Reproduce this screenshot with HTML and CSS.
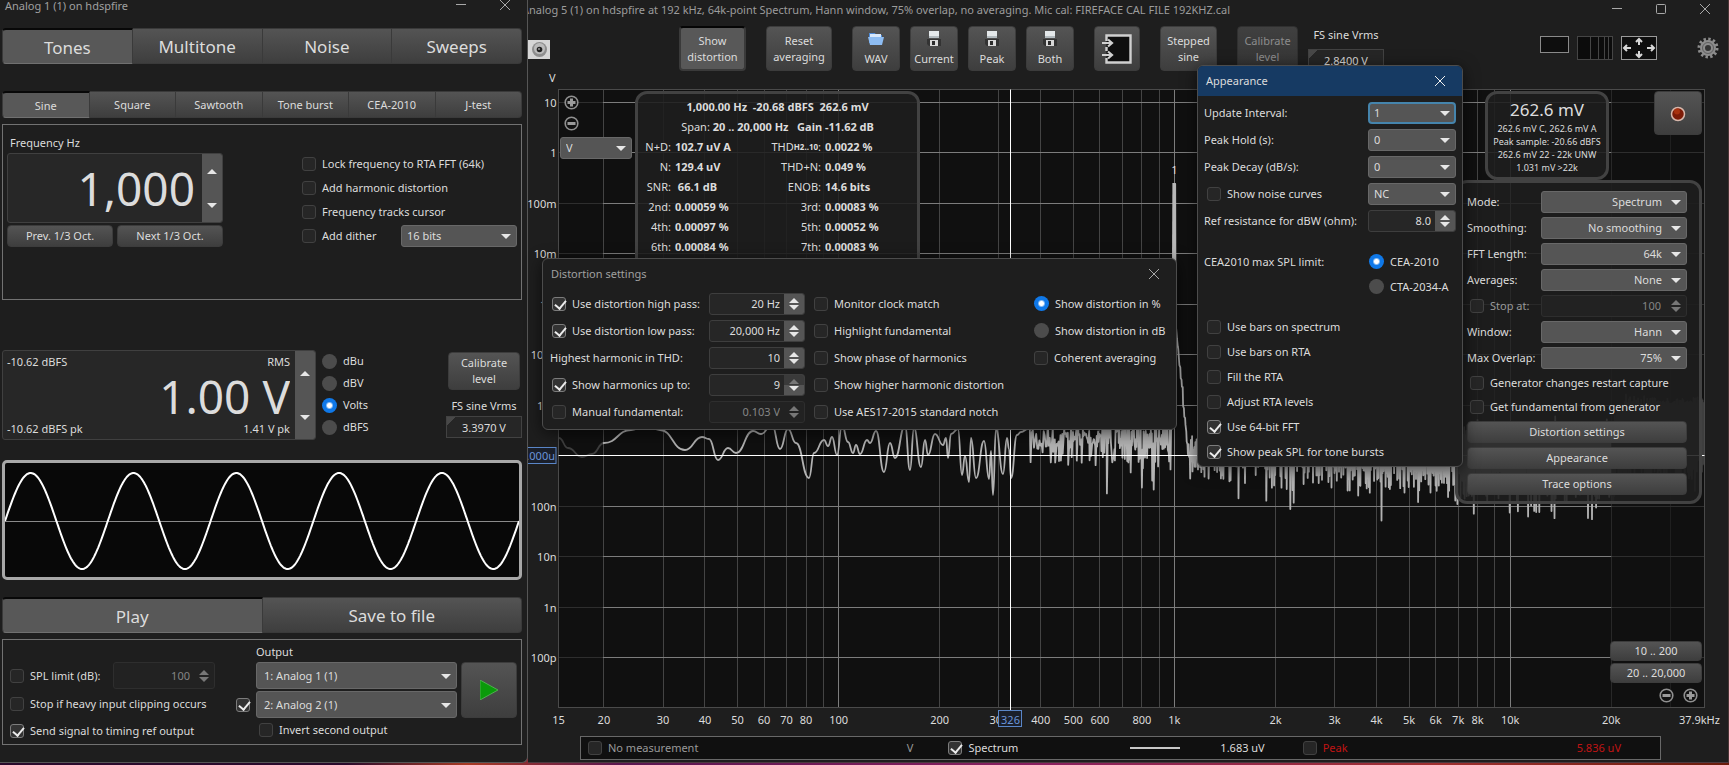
FILE: index.html
```html
<!DOCTYPE html>
<html lang="en">
<head>
    <meta charset="UTF-8">
    <meta name="viewport" content="width=device-width, initial-scale=1.0">
    <title>RTA</title>
    <link rel="stylesheet" href="styles.css">
</head>
<body>
    <svg class="defs" aria-hidden="true">
        <symbol id="close" viewBox="0 0 10 10"><path d="M0 0L10 10M10 0L0 10" stroke="currentColor" fill="none"/></symbol>
        <symbol id="minimize" viewBox="0 0 10 10"><path d="M0 4.5H10" stroke="currentColor" fill="none"/></symbol>
        <symbol id="maximize" viewBox="0 0 10 10"><rect x=".5" y=".5" width="9" height="9" rx="1" stroke="currentColor" fill="none"/></symbol>
        <symbol id="plus" viewBox="0 0 15 15"><circle cx="7.5" cy="7.5" r="6.3" fill="#111" stroke="#909090" stroke-width="1.6"/><path d="M3.5 7.5H11.5M7.5 3.5V11.5" stroke="#9a9a9a" stroke-width="3"/></symbol>
        <symbol id="minus" viewBox="0 0 15 15"><circle cx="7.5" cy="7.5" r="6.3" fill="#111" stroke="#909090" stroke-width="1.6"/><path d="M3.5 7.5H11.5" stroke="#9a9a9a" stroke-width="3"/></symbol>
        <symbol id="floppy" viewBox="0 0 16 16">
            <path d="M1 8H15V15H3L1 13Z" fill="#333"/>
            <rect x="3" y="0" width="10" height="7" fill="#e4e8ea"/>
            <path d="M3 5H13V7H3Z" fill="#b4bcc0"/>
            <rect x="4" y="9" width="8" height="6" fill="#d8d8d8"/>
            <rect x="6" y="10" width="3" height="4" fill="#2c2c2c"/>
        </symbol>
    </svg>

    <main class="desktop">
        <section class="generator">
            <header class="gen-title">
                <span>Analog 1 (1) on hdspfire</span>
                <button class="win-btn" aria-label="Minimize"><svg><use href="#minimize"/></svg></button>
                <button class="win-btn" aria-label="Close"><svg><use href="#close"/></svg></button>
            </header>

            <nav class="tabs big">
                <button class="tab active">Tones</button>
                <button class="tab">Multitone</button>
                <button class="tab">Noise</button>
                <button class="tab">Sweeps</button>
            </nav>
            <nav class="tabs small">
                <button class="tab active">Sine</button>
                <button class="tab">Square</button>
                <button class="tab">Sawtooth</button>
                <button class="tab">Tone burst</button>
                <button class="tab">CEA-2010</button>
                <button class="tab">J-test</button>
            </nav>

            <div class="box tone">
                <div class="freq">
                    <label for="freq">Frequency Hz</label>
                    <div class="big-spin">
                        <input id="freq" class="big-value" type="text" value="1,000">
                        <div class="steps"><button class="up" aria-label="Up"></button><button class="down" aria-label="Down"></button></div>
                    </div>
                    <div class="oct">
                        <button class="btn">Prev. 1/3 Oct.</button>
                        <button class="btn">Next 1/3 Oct.</button>
                    </div>
                </div>
                <div class="tone-options">
                    <label class="check"><input type="checkbox">Lock frequency to RTA FFT (64k)</label>
                    <label class="check"><input type="checkbox">Add harmonic distortion</label>
                    <label class="check"><input type="checkbox">Frequency tracks cursor</label>
                    <div class="dither">
                        <label class="check"><input type="checkbox">Add dither</label>
                        <div class="select"><select aria-label="Dither bits"><option>16 bits</option></select></div>
                    </div>
                </div>
            </div>

            <div class="level">
                <div class="big-spin">
                    <div class="level-value">
                        <div class="pair"><span>-10.62 dBFS</span><span>RMS</span></div>
                        <input class="big-value" type="text" value="1.00 V" aria-label="Level">
                        <div class="pair"><span>-10.62 dBFS pk</span><span>1.41 V pk</span></div>
                    </div>
                    <div class="steps"><button class="up" aria-label="Up"></button><button class="down" aria-label="Down"></button></div>
                </div>
                <div class="units">
                    <label class="check"><input type="radio" name="unit">dBu</label>
                    <label class="check"><input type="radio" name="unit">dBV</label>
                    <label class="check"><input type="radio" name="unit" checked>Volts</label>
                    <label class="check"><input type="radio" name="unit">dBFS</label>
                </div>
                <div class="cal">
                    <button class="btn two">Calibrate<br>level</button>
                    <label for="fs-out">FS sine Vrms</label>
                    <div class="corner"><input id="fs-out" type="text" value="3.3970 V"></div>
                </div>
            </div>

            <div class="scope"><svg id="scope"></svg></div>

            <nav class="tabs big">
                <button class="tab active">Play</button>
                <button class="tab">Save to file</button>
            </nav>
            <div class="box output">
                <div class="out-left">
                    <div class="spl">
                        <label class="check"><input type="checkbox">SPL limit (dB):</label>
                        <div class="spin disabled">
                            <input type="text" value="100" disabled aria-label="SPL limit">
                            <div class="steps"><button class="up" disabled aria-label="Up"></button><button class="down" disabled aria-label="Down"></button></div>
                        </div>
                    </div>
                    <label class="check"><input type="checkbox">Stop if heavy input clipping occurs</label>
                    <label class="check"><input type="checkbox" checked>Send signal to timing ref output</label>
                </div>
                <label class="check second"><input type="checkbox" checked aria-label="Use second output"></label>
                <div class="out-right">
                    <label for="out1">Output</label>
                    <div class="select tall"><select id="out1"><option>1: Analog 1 (1)</option></select></div>
                    <div class="select tall"><select aria-label="Second output"><option>2: Analog 2 (1)</option></select></div>
                    <label class="check"><input type="checkbox">Invert second output</label>
                </div>
                <button class="btn play" aria-label="Play"><svg viewBox="0 0 18 20"><path d="M0 0L18 10L0 20Z" fill="#0a9a0a" stroke="#4fae4f"/></svg></button>
            </div>
        </section>

        <section class="rta">
            <header class="rta-title">
                <span>Analog 5 (1) on hdspfire at 192 kHz, 64k-point Spectrum, Hann window, 75% overlap, no averaging. Mic cal: FIREFACE CAL FILE 192KHZ.cal</span>
                <button class="win-btn" aria-label="Minimize"><svg><use href="#minimize"/></svg></button>
                <button class="win-btn" aria-label="Maximize"><svg><use href="#maximize"/></svg></button>
                <button class="win-btn" aria-label="Close"><svg><use href="#close"/></svg></button>
            </header>

            <div class="toolbar">
                <button class="plain camera" aria-label="Capture image">
                    <svg viewBox="0 0 22 19"><rect width="22" height="19" fill="#d6d6d6"/><circle cx="11.500" cy="9.500" r="7.500" fill="#8e8e8e"/><circle cx="11.500" cy="8.500" r="5.500" fill="#bcbcbc"/><circle cx="11.500" cy="9.500" r="2.800" fill="#222"/><circle cx="11" cy="9" r="1" fill="#999"/></svg>
                </button>
                <button class="btn two pressed w67">Show<br>distortion</button>
                <button class="btn two w66">Reset<br>averaging</button>
                <div class="files">
                    <button class="btn file"><svg viewBox="0 0 18 16"><path d="M2 2H8L9 4H15V12H2Z" fill="#4f8ad6"/><path d="M3 3H14V7H3Z" fill="#d8e8fb"/><path d="M1 6H17L15 14H3Z" fill="#8dbcf2"/></svg>WAV</button>
                    <button class="btn file"><svg><use href="#floppy"/></svg>Current</button>
                    <button class="btn file"><svg><use href="#floppy"/></svg>Peak</button>
                    <button class="btn file"><svg><use href="#floppy"/></svg>Both</button>
                </div>
                <button class="btn inputs" aria-label="Inputs">
                    <svg viewBox="0 0 30 30"><path d="M4.500 7V1.500H28.500V28.500H4.500V24M4.500 13V17" fill="#0e0e0e" stroke="#d0d0d0" stroke-width="2.400"/><path d="M0 9H10M6 5.500L10 9L6 12.500M0 21H10M6 17.500L10 21L6 24.500" fill="none" stroke="#d0d0d0" stroke-width="2.200"/></svg>
                </button>
                <button class="btn two w57">Stepped<br>sine</button>
                <button class="btn two w61" disabled>Calibrate<br>level</button>
                <div class="fs">
                    <label for="fs-in">FS sine Vrms</label>
                    <div class="corner"><input id="fs-in" type="text" value="2.8400 V"></div>
                </div>
                <div class="views">
                    <button class="plain" aria-label="Panel"><svg width="29" height="17"><rect x=".5" y=".5" width="28" height="16" fill="#0e0e0e" stroke="#8a8a8a"/></svg></button>
                    <button class="plain" aria-label="Grid"><svg width="36" height="24"><rect x=".5" y=".5" width="35" height="23" fill="#0c0c0c" stroke="#454545"/><path d="M13.500 0V24M21.500 0V24M27.500 0V24M31.500 0V24" stroke="#454545"/></svg></button>
                    <button class="plain" aria-label="Fit"><svg width="36" height="24"><rect x=".5" y=".5" width="35" height="23" fill="#0e0e0e" stroke="#9a9a9a"/><path d="M10 12H3M6 9L3 12L6 15M26 12H33M30 9L33 12L30 15M18 9V3M15 6L18 3L21 6M18 15V21M15 18L18 21L21 18" fill="none" stroke="#d8d8d8" stroke-width="2"/></svg></button>
                </div>
                <button class="plain gear" aria-label="Settings">
                    <svg viewBox="0 0 22 22"><circle cx="11" cy="11" r="9" fill="none" stroke="#8d8d8d" stroke-width="3" stroke-dasharray="2.400 2.310"/><circle cx="11" cy="11" r="5.500" fill="#333" stroke="#8d8d8d" stroke-width="5"/><circle cx="11" cy="11" r="5.500" fill="none" stroke="#5e5e5e"/></svg>
                </button>
            </div>

            <div class="chart">
                <svg id="plot" role="img" aria-label="Spectrum"></svg>

                <div class="y-zoom">
                    <button class="plain zoom" aria-label="Zoom in"><svg><use href="#plus"/></svg></button>
                    <button class="plain zoom" aria-label="Zoom out"><svg><use href="#minus"/></svg></button>
                    <div class="select"><select aria-label="Units"><option>V</option></select></div>
                </div>

                <div class="glass stats">
                    <p><b>1,000.00 Hz&nbsp; -20.68 dBFS&nbsp; 262.6 mV</b></p>
                    <p>Span: <b>20 .. 20,000 Hz &nbsp; Gain -11.62 dB</b></p>
                    <dl>
                        <dt>N+D:</dt><dd>102.7 uV A</dd><dt>THD<small>H2..10</small>:</dt><dd>0.0022 %</dd>
                        <dt>N:</dt><dd>129.4 uV</dd><dt>THD+N:</dt><dd>0.049 %</dd>
                        <dt>SNR:</dt><dd>&nbsp;66.1 dB</dd><dt>ENOB:</dt><dd>14.6 bits</dd>
                        <dt>2nd:</dt><dd>0.00059 %</dd><dt>3rd:</dt><dd>0.00083 %</dd>
                        <dt>4th:</dt><dd>0.00097 %</dd><dt>5th:</dt><dd>0.00052 %</dd>
                        <dt>6th:</dt><dd>0.00084 %</dd><dt>7th:</dt><dd>0.00083 %</dd>
                    </dl>
                </div>

                <div class="glass readout">
                    <strong>262.6 mV</strong>
                    <span>262.6 mV C, 262.6 mV A</span>
                    <span>Peak sample: -20.66 dBFS</span>
                    <span>262.6 mV 22 - 22k UNW</span>
                    <span>1.031 mV &gt;22k</span>
                </div>

                <button class="btn record" aria-label="Record"><svg viewBox="0 0 16 16"><circle cx="8" cy="8" r="6.500" fill="#7d1c08" stroke="#d8b8ac" stroke-width="1.500"/><circle cx="7" cy="5.500" r="3" fill="#a8320f"/></svg></button>

                <div class="glass controls">
                    <div class="row"><label for="mode">Mode:</label><div class="select right"><select id="mode"><option>Spectrum</option></select></div></div>
                    <div class="row"><label for="smooth">Smoothing:</label><div class="select right"><select id="smooth"><option>No smoothing</option></select></div></div>
                    <div class="row"><label for="fft">FFT Length:</label><div class="select right"><select id="fft"><option>64k</option></select></div></div>
                    <div class="row"><label for="avg">Averages:</label><div class="select right"><select id="avg"><option>None</option></select></div></div>
                    <div class="row">
                        <label class="check dim"><input type="checkbox" disabled>Stop at:</label>
                        <div class="spin disabled">
                            <input type="text" value="100" disabled aria-label="Stop at">
                            <div class="steps"><button class="up" disabled aria-label="Up"></button><button class="down" disabled aria-label="Down"></button></div>
                        </div>
                    </div>
                    <div class="row"><label for="win">Window:</label><div class="select right"><select id="win"><option>Hann</option></select></div></div>
                    <div class="row"><label for="overlap">Max Overlap:</label><div class="select right"><select id="overlap"><option>75%</option></select></div></div>
                    <label class="check"><input type="checkbox">Generator changes restart capture</label>
                    <label class="check"><input type="checkbox">Get fundamental from generator</label>
                    <button class="btn">Distortion settings</button>
                    <button class="btn">Appearance</button>
                    <button class="btn">Trace options</button>
                </div>

                <div class="x-zoom">
                    <button class="btn">10 .. 200</button>
                    <button class="btn">20 .. 20,000</button>
                    <div>
                        <button class="plain zoom" aria-label="Zoom out"><svg><use href="#minus"/></svg></button>
                        <button class="plain zoom" aria-label="Zoom in"><svg><use href="#plus"/></svg></button>
                    </div>
                </div>
            </div>

            <footer class="legend">
                <label class="check dim"><input type="checkbox">No measurement</label>
                <span class="dim unit">V</span>
                <label class="check"><input type="checkbox" checked>Spectrum</label>
                <i class="line"></i>
                <span class="value">1.683 uV</span>
                <label class="check red"><input type="checkbox">Peak</label>
                <span class="red peak">5.836 uV</span>
            </footer>
        </section>

        <section class="dialog distortion">
            <header>
                <h2>Distortion settings</h2>
                <button class="win-btn" aria-label="Close"><svg><use href="#close"/></svg></button>
            </header>
            <div class="dist-grid">
                <label class="check"><input type="checkbox" checked>Use distortion high pass:</label>
                <div class="spin"><input type="text" value="20 Hz" aria-label="High pass"><div class="steps"><button class="up" aria-label="Up"></button><button class="down" aria-label="Down"></button></div></div>
                <label class="check"><input type="checkbox">Monitor clock match</label>
                <label class="check last"><input type="radio" name="dist" checked>Show distortion in %</label>

                <label class="check"><input type="checkbox" checked>Use distortion low pass:</label>
                <div class="spin"><input type="text" value="20,000 Hz" aria-label="Low pass"><div class="steps"><button class="up" aria-label="Up"></button><button class="down" aria-label="Down"></button></div></div>
                <label class="check"><input type="checkbox">Highlight fundamental</label>
                <label class="check last"><input type="radio" name="dist">Show distortion in dB</label>

                <label class="flush" for="highest">Highest harmonic in THD:</label>
                <div class="spin"><input id="highest" type="text" value="10"><div class="steps"><button class="up" aria-label="Up"></button><button class="down" aria-label="Down"></button></div></div>
                <label class="check"><input type="checkbox">Show phase of harmonics</label>
                <label class="check last"><input type="checkbox">Coherent averaging</label>

                <label class="check"><input type="checkbox" checked>Show harmonics up to:</label>
                <div class="spin"><input type="text" value="9" aria-label="Harmonics"><div class="steps"><button class="up" disabled aria-label="Up"></button><button class="down" aria-label="Down"></button></div></div>
                <label class="check wide"><input type="checkbox">Show higher harmonic distortion</label>

                <label class="check"><input type="checkbox">Manual fundamental:</label>
                <div class="spin disabled"><input type="text" value="0.103 V" disabled aria-label="Fundamental"><div class="steps"><button class="up" disabled aria-label="Up"></button><button class="down" disabled aria-label="Down"></button></div></div>
                <label class="check wide"><input type="checkbox">Use AES17-2015 standard notch</label>
            </div>
        </section>

        <section class="dialog appearance">
            <header>
                <h2>Appearance</h2>
                <button class="win-btn" aria-label="Close"><svg><use href="#close"/></svg></button>
            </header>
            <div class="app-body">
                <div class="row"><label for="interval">Update Interval:</label><div class="select focus"><select id="interval"><option>1</option></select></div></div>
                <div class="row"><label for="hold">Peak Hold (s):</label><div class="select"><select id="hold"><option>0</option></select></div></div>
                <div class="row"><label for="decay">Peak Decay (dB/s):</label><div class="select"><select id="decay"><option>0</option></select></div></div>
                <div class="row"><label class="check"><input type="checkbox">Show noise curves</label><div class="select"><select aria-label="Noise curves"><option>NC</option></select></div></div>
                <div class="row"><label for="ohm">Ref resistance for dBW (ohm):</label><div class="spin"><input id="ohm" type="text" value="8.0"><div class="steps"><button class="up" aria-label="Up"></button><button class="down" aria-label="Down"></button></div></div></div>
                <fieldset>
                    <legend>CEA2010 max SPL limit:</legend>
                    <div>
                        <label class="check"><input type="radio" name="cea" checked>CEA-2010</label>
                        <label class="check"><input type="radio" name="cea">CTA-2034-A</label>
                    </div>
                </fieldset>
                <label class="check"><input type="checkbox">Use bars on spectrum</label>
                <label class="check"><input type="checkbox">Use bars on RTA</label>
                <label class="check"><input type="checkbox">Fill the RTA</label>
                <label class="check"><input type="checkbox">Adjust RTA levels</label>
                <label class="check"><input type="checkbox" checked>Use 64-bit FFT</label>
                <label class="check"><input type="checkbox" checked>Show peak SPL for tone bursts</label>
            </div>
        </section>
    </main>
    <script src="script.js"></script>
</body>
</html>
```
FILE: styles.css
```css
* {
    box-sizing: border-box;
}
body {
    margin: 0;
    background: linear-gradient(90deg, #2a0a2c 0%, #2a0a2c 20%, #a83a24 27%, #5a1650 36%, #8a2060 60%, #a03030 83%, #6a1c0c 100%);
    color: #dcdcdc;
    font-family: "Segoe UI", "Noto Sans", sans-serif;
    font-size: 11px;
    line-height: 16px;
}
button, input, select {
    font: inherit;
    color: inherit;
    margin: 0;
}
h2, p, dl, dd {
    margin: 0;
}
.defs {
    display: none;
}
.desktop {
    position: relative;
    display: grid;
    grid-template-columns: 528px 1fr;
    min-height: 100vh;
    padding-bottom: 2px;
}

/* buttons */
.btn {
    padding: 0;
    border: 1px solid #3c3c3c;
    border-radius: 4px;
    background: linear-gradient(#545454, #3e3e3e);
    height: 22px;
    text-align: center;
}
.btn:disabled {
    background: linear-gradient(#404040, #343434);
    border-color: #303030;
    color: #8c8c8c;
}
.btn.pressed {
    background: #585858;
    border: 2px solid #3a3a3a;
    border-top-color: #050505;
}
.plain, .win-btn {
    border: 0;
    padding: 0;
    background: none;
    display: flex;
}
.win-btn {
    color: #a8a8a8;
}
.win-btn svg {
    width: 10px;
    height: 10px;
    overflow: visible;
}
.zoom svg {
    width: 15px;
    height: 15px;
}

/* tick boxes and radios */
.check {
    display: flex;
    align-items: center;
    gap: 6px;
    white-space: nowrap;
}
.check input {
    appearance: none;
    flex: none;
    position: relative;
    width: 14px;
    height: 14px;
    border: 1px solid #414141;
    border-radius: 3px;
    background: #262626;
}
.check input:checked {
    border-color: #7c7c7c;
    background: #333;
}
.check input[type=checkbox]:checked::before {
    content: "";
    position: absolute;
    left: 4px;
    top: 0;
    width: 5px;
    height: 9px;
    border: solid #ececec;
    border-width: 0 2px 2px 0;
    transform: rotate(40deg);
}
.check input[type=radio] {
    width: 15px;
    height: 15px;
    border: 0;
    border-radius: 50%;
    background: #4c4c4c;
}
.check input[type=radio]:checked {
    background: radial-gradient(circle, #fff 0 2px, #0f78e8 4px);
}
.dim {
    color: #999;
}
.red {
    color: #c01414;
}

/* drop-downs */
.select {
    position: relative;
    height: 22px;
}
.select select {
    appearance: none;
    width: 100%;
    height: 100%;
    padding: 0 24px 0 5px;
    border: 1px solid #686868;
    border-radius: 3px;
    background: #555;
}
.select::after {
    content: "";
    position: absolute;
    right: 6px;
    top: 50%;
    margin-top: -2px;
    border: 5px solid transparent;
    border-top-color: #e6e6e6;
    border-bottom: 0;
    pointer-events: none;
}
.select.right select {
    text-align-last: right;
}
.select.tall {
    height: 27px;
}
.select.tall select {
    padding-left: 7px;
}
.select.focus select {
    border: 2px solid #4584ac;
    border-radius: 4px;
    padding-left: 4px;
}

/* number boxes */
.spin {
    display: flex;
    height: 22px;
    border: 1px solid #3e3e3e;
    border-radius: 3px;
    background: #262626;
    overflow: hidden;
}
.spin input {
    flex: 1;
    min-width: 0;
    padding: 0 4px;
    border: 0;
    background: none;
    text-align: right;
}
.steps {
    display: flex;
    flex-direction: column;
    flex: none;
    width: 20px;
    background: #555;
}
.steps button {
    flex: 1;
    display: flex;
    justify-content: center;
    align-items: flex-start;
    padding: 1px 0;
    border: 0;
    background: none;
}
.steps .up {
    align-items: flex-end;
}
.steps button::before {
    content: "";
    border: 5px solid transparent;
    border-top-color: #e6e6e6;
    border-bottom: 0;
}
.steps .up::before {
    border-bottom: 5px solid #e6e6e6;
    border-top: 0;
}
.steps .down:disabled::before {
    border-top-color: #777;
}
.steps .up:disabled::before {
    border-bottom-color: #777;
}
.steps .up:disabled {
    background: #3a3a3a;
}
.spin.disabled {
    border-color: #2e2e2e;
    background: #222;
    color: #858585;
}
.spin.disabled .steps, .spin.disabled .steps button {
    background: none;
}
.spin input:disabled {
    color: #858585;
}
.corner {
    background: linear-gradient(135deg, #484848 6px, transparent 6px) #262626;
    border: 1px solid #424242;
    height: 22px;
}
.corner input {
    width: 100%;
    height: 100%;
    padding: 0;
    border: 0;
    background: none;
    text-align: center;
}

/* generator window */
.generator {
    padding: 0 5px 0 2px;
    background: #1e1e1e;
    border-right: 1px solid #565656;
    border-bottom: 1px solid #565656;
    border-bottom-right-radius: 6px;
}
.gen-title {
    display: flex;
    height: 28px;
    padding: 0 12px 0 3px;
    line-height: 12px;
    color: #a0a0a0;
}
.gen-title span {
    flex: 1;
}
.gen-title .win-btn {
    margin-left: 34px;
}
.tabs {
    display: flex;
}
.tab {
    flex: 1 1 0;
    padding: 0;
    border: 1px solid #3a3a3a;
    border-left-width: 0;
    background: linear-gradient(#545454, #3e3e3e);
}
.tab:first-child {
    border-left-width: 1px;
    border-radius: 4px 0 0 4px;
}
.tab:last-child {
    border-radius: 0 4px 4px 0;
}
.tab.active {
    background: #585858;
    border-top: 2px solid #080808;
    border-bottom-color: #707070;
}
.tabs.big .tab {
    height: 36px;
    padding-top: 2px;
    font-size: 17px;
}
.tabs.small {
    margin: 27px 0 6px;
}
.tabs.small .tab {
    height: 27px;
    padding-top: 1px;
}
.box {
    border: 1px solid #727272;
}
.tone {
    display: flex;
    justify-content: space-between;
    height: 176px;
    padding: 10px 4px;
}
.freq {
    width: 216px;
}
.freq label {
    display: block;
    height: 18px;
    padding-left: 3px;
}
.big-spin {
    display: flex;
    height: 70px;
    border: 1px solid #404040;
    border-radius: 3px;
    background: #272727;
    overflow: hidden;
}
.big-value {
    width: 100%;
    min-width: 0;
    padding: 0 7px 0 0;
    border: 0;
    background: none;
    font-size: 46px;
    text-align: right;
}
.big-spin .steps button {
    align-items: center;
}
.oct {
    display: grid;
    grid-template-columns: 1fr 1fr;
    gap: 4px;
    margin-top: 2px;
}
.tone-options {
    width: 215px;
    padding-top: 17px;
}
.tone-options .check {
    height: 24px;
}
.dither {
    display: flex;
    align-items: center;
    justify-content: space-between;
}
.dither .select {
    width: 116px;
}
.level {
    display: flex;
    margin: 50px 0 20px;
    height: 90px;
}
.level .big-spin {
    width: 314px;
    height: 90px;
}
.level-value {
    flex: 1;
    display: flex;
    flex-direction: column;
    padding: 3px 5px 2px 4px;
}
.level-value .big-value {
    flex: 1;
    height: 0;
    padding: 0;
}
.pair {
    display: flex;
    justify-content: space-between;
}
.units {
    padding-left: 6px;
}
.units .check {
    height: 22px;
}
.cal {
    display: flex;
    flex-direction: column;
    align-items: center;
    width: 76px;
    margin-left: auto;
    padding-top: 2px;
}
.cal .btn {
    width: 72px;
    height: 38px;
}
.cal label {
    margin: 8px 0 2px;
}
.scope {
    height: 120px;
    padding: 0;
    border: 3px solid #a8a8a8;
    border-radius: 5px;
    background: #080808;
}
.scope svg {
    display: block;
    width: 100%;
    height: 100%;
}
.scope + .tabs {
    margin: 17px 0 6px;
}
.output {
    display: flex;
    height: 106px;
    padding: 4px 4px 0 7px;
}
.out-left {
    width: 226px;
    padding-top: 18px;
}
.out-left .check {
    height: 27px;
}
.spl {
    display: flex;
    justify-content: space-between;
    align-items: center;
    height: 27px;
    margin-bottom: 1px;
    padding-right: 21px;
}
.spl .spin {
    width: 102px;
    height: 27px;
}
.second {
    align-self: flex-start;
    width: 20px;
    margin-top: 54px;
}
.out-right {
    display: grid;
    gap: 2px;
    flex: 1;
    align-content: start;
}
.out-right .check {
    height: 20px;
    padding-left: 3px;
}
.play {
    width: 56px;
    height: 56px;
    margin: 18px 0 0 4px;
}
.play svg {
    width: 18px;
    height: 20px;
    vertical-align: middle;
}

/* analyser window */
.rta {
    display: flex;
    flex-direction: column;
    min-width: 0;
    background: #1e1e1e;
    border-bottom: 1px solid #4c3a40;
    border-right: 1px solid #4a3434;
}
.rta-title {
    display: flex;
    height: 20px;
    padding-right: 18px;
    overflow: hidden;
    line-height: 20px;
    color: #9c9c9c;
    white-space: nowrap;
}
.rta-title span {
    flex: 1;
    margin-left: -6px;
}
.rta-title .win-btn {
    margin: 4px 0 0 34px;
}
.toolbar {
    display: flex;
    gap: 20px;
    height: 52px;
    padding: 6px 9px 0 0;
}
.toolbar .btn {
    height: 45px;
}
.camera {
    margin: 14px 109px 0 0;
    height: 19px;
}
.camera svg {
    width: 22px;
    height: 19px;
}
.w67 {
    width: 67px;
}
.w66 {
    width: 66px;
}
.w57 {
    width: 57px;
}
.w61 {
    width: 61px;
}
.files {
    display: flex;
    gap: 10px;
}
.file {
    display: flex;
    flex-direction: column;
    align-items: center;
    width: 48px;
    padding-top: 4px;
}
.file svg {
    width: 18px;
    height: 16px;
    margin-bottom: 4px;
}
.inputs {
    width: 46px;
}
.inputs svg {
    width: 30px;
    height: 30px;
    vertical-align: middle;
}
.fs {
    width: 76px;
    margin-left: -10px;
    text-align: center;
}
.fs label {
    display: block;
    height: 23px;
    line-height: 18px;
}
.views {
    display: flex;
    gap: 8px;
    align-items: flex-start;
    margin-left: auto;
    padding-top: 10px;
}
.gear {
    margin: 11px 0 0 20px;
    height: 22px;
}
.gear svg {
    width: 22px;
    height: 22px;
}
.chart {
    position: relative;
    flex: 1;
    min-height: 600px;
}
#plot {
    position: absolute;
    width: 100%;
    height: 100%;
    fill: #dcdcdc;
}
.y-zoom {
    position: absolute;
    left: 32px;
    top: 23px;
    display: grid;
    gap: 6px;
    width: 72px;
}
.y-zoom .zoom {
    padding-left: 4px;
}
.glass {
    position: absolute;
    border: 3px solid #424242;
    border-radius: 12px;
    background: rgba(30, 30, 30, 0.88);
}
.stats {
    left: 107px;
    top: 19px;
    width: 285px;
    padding: 3px 0 10px;
    line-height: 20px;
    white-space: nowrap;
}
.stats p {
    text-align: center;
}
.stats dl {
    display: grid;
    grid-template-columns: 33px 84px 58px 1fr;
    column-gap: 4px;
}
.stats dt {
    display: flex;
    justify-content: flex-end;
}
.stats dd {
    font-weight: 700;
}
.stats small {
    font-size: 8px;
    font-weight: 700;
}
.readout {
    right: 119px;
    top: 19px;
    width: 124px;
    display: flex;
    flex-direction: column;
    align-items: center;
    padding: 4px 0 3px;
    font-size: 9px;
    line-height: 13px;
}
.readout strong {
    font-size: 17px;
    font-weight: 400;
    line-height: 24px;
}
.record {
    position: absolute;
    right: 26px;
    top: 19px;
    width: 48px;
    height: 44px;
}
.record svg {
    width: 16px;
    height: 16px;
    vertical-align: middle;
}
.controls {
    right: 26px;
    top: 108px;
    width: 247px;
    padding: 6px 12px 4px 9px;
    display: flex;
    flex-direction: column;
}
.row {
    display: flex;
    align-items: center;
    justify-content: space-between;
    white-space: nowrap;
}
.controls .row {
    height: 26px;
}
.controls .select, .controls .spin {
    width: 146px;
}
.controls .spin input {
    padding-right: 5px;
}
.controls .check {
    height: 24px;
    padding-left: 3px;
}
.controls .btn {
    margin: 2px 0;
}
.x-zoom {
    position: absolute;
    right: 26px;
    bottom: 29px;
    display: grid;
    gap: 2px;
    width: 92px;
}
.x-zoom .btn {
    height: 20px;
}
.x-zoom div {
    display: flex;
    justify-content: flex-end;
    gap: 9px;
    padding: 3px 4px 0 0;
}
.legend {
    display: flex;
    align-items: center;
    height: 24px;
    margin: 4px 67px 2px 52px;
    padding: 0 39px 0 7px;
    border: 1px solid #686868;
    background: #101010;
}
.unit {
    margin: 0 35px 0 auto;
}
.legend .line {
    width: 50px;
    height: 2px;
    margin-left: 112px;
    background: #c8c8c8;
}
.legend .value {
    margin: 0 38px 0 40px;
}
.legend .peak {
    margin-left: 229px;
}

/* floating dialogs */
.dialog {
    position: absolute;
    border: 1px solid #4c4c4c;
    border-radius: 6px;
    background: #1e1e1e;
    box-shadow: 0 3px 16px rgba(0, 0, 0, 0.6);
    overflow: hidden;
}
.dialog header {
    display: flex;
    align-items: center;
    justify-content: space-between;
}
.dialog h2 {
    font-size: 11px;
    font-weight: 400;
}
.distortion {
    left: 542px;
    top: 258px;
    width: 635px;
    padding-bottom: 4px;
}
.distortion header {
    height: 31px;
    padding: 0 17px 1px 8px;
    color: #a0a0a0;
}
.dist-grid {
    display: grid;
    grid-template-columns: 157px 96px 220px 1fr;
    grid-auto-rows: 27px;
    align-items: center;
    padding-left: 9px;
}
.dist-grid .spin + .check {
    margin-left: 9px;
}
.dist-grid .last {
    padding-left: 9px;
}
.dist-grid .wide {
    grid-column: span 2;
}
.flush {
    margin-left: -2px;
}
.appearance {
    left: 1197px;
    top: 65px;
    width: 266px;
}
.appearance header {
    height: 30px;
    padding: 0 17px 0 8px;
    background: #163a63;
}
.appearance .win-btn {
    color: #f0f0f0;
}
.app-body {
    padding: 3px 6px 2px;
}
.appearance .row {
    height: 27px;
}
.appearance .select, .appearance .spin {
    width: 88px;
}
.appearance .check {
    height: 25px;
    padding-left: 3px;
}
fieldset {
    display: flex;
    justify-content: space-between;
    margin: 0;
    padding: 15px 0 15px;
    border: 0;
}
fieldset legend {
    float: left;
    padding: 0;
    line-height: 25px;
}
fieldset div {
    width: 87px;
}
.appearance fieldset .check {
    padding-left: 0;
}
```
FILE: script.js
```js
const NS = 'http://www.w3.org/2000/svg';

function add(parent, tag, attrs, text) {
    const el = document.createElementNS(NS, tag);
    for (const key in attrs) el.setAttribute(key, attrs[key]);
    if (text) el.textContent = text;
    parent.appendChild(el);
    return el;
}

// repeatable noise
let seed = 7;
function random() {
    seed = (seed * 16807) % 2147483647;
    return seed / 2147483647;
}

function drawScope() {
    const svg = document.getElementById('scope');
    const w = svg.clientWidth;
    const h = svg.clientHeight;
    const mid = h / 2 + 1;
    let d = '';
    for (let x = 0; x <= w; x++) {
        d += (x ? 'L' : 'M') + x + ' ' + (mid - 48 * Math.sin(x / w * 10 * Math.PI)).toFixed(1);
    }
    add(svg, 'path', { d: 'M0 ' + (mid + 0.5) + 'H' + w, stroke: '#8a8a8a' });
    add(svg, 'path', { d: d, fill: 'none', stroke: '#fff', 'stroke-width': 2 });
}

function drawPlot() {
    const svg = document.getElementById('plot');
    const w = svg.clientWidth;
    const h = svg.clientHeight;
    const left = 30.5, right = w - 23.5, top = 17.5, bottom = h - 24.5;
    const decade = (right - left) / Math.log10(37900 / 14.65);
    const fx = f => left + decade * Math.log10(f / 14.65);
    const step = 50.45;
    const crisp = v => Math.floor(v) + 0.5;

    add(svg, 'rect', { x: left, y: top, width: right - left, height: bottom - top, fill: '#101010' });

    // grid
    for (let p = 1; p <= 4; p++) {
        for (let n = 1; n < 10; n++) {
            const f = n * Math.pow(10, p);
            if (f < 20 || f > 37900) continue;
            const x = crisp(fx(f));
            add(svg, 'path', { d: `M${x} ${top}V${bottom}`, stroke: n === 1 ? '#7c7c7c' : '#444' });
        }
    }
    const levels = ['10', '1', '100m', '10m', '1m', '100u', '10u', '1u', '100n', '10n', '1n', '100p'];
    levels.forEach((name, i) => {
        const y = crisp(30.5 + i * step);
        add(svg, 'path', { d: `M${left} ${y}H${right}`, stroke: '#7c7c7c' });
        if (name !== '1u') add(svg, 'text', { x: left - 2, y: y + 4, 'text-anchor': 'end' }, name);
    });
    add(svg, 'text', { x: left - 3, y: 10, 'text-anchor': 'end' }, 'V');

    // low end of the trace
    const low = [[31, 366], [40, 376], [54, 385], [64, 382], [76, 371], [103, 358], [118, 353], [132, 358], [157, 378], [174, 365],
        [181, 367], [190, 388], [200, 376], [208, 381], [225, 359], [233, 362], [244, 353], [252, 377], [260, 357], [268, 371],
        [281, 406], [286, 381], [296, 368], [300, 374], [304, 365], [309, 383], [314, 353], [320, 370], [325, 381], [328, 373],
        [332, 382], [339, 368], [342, 371], [348, 359], [356, 400], [362, 371], [367, 386], [377, 354], [382, 398], [386, 356],
        [393, 395], [397, 368], [400, 383], [407, 362], [415, 373], [418, 366], [420, 386], [423, 362], [430, 357], [434, 403],
        [437, 384], [441, 410], [443, 366], [448, 406], [456, 369], [461, 407], [463, 379], [465, 423], [468, 357], [475, 402],
        [479, 366], [481, 377], [483, 406], [489, 363], [493, 360], [500, 357]];
    let d = `M${low[0][0]} ${low[0][1]}`;
    for (let i = 1; i < low.length; i++) {
        const [x0, y0] = low[i - 1];
        const [x1, y1] = low[i];
        const m = (x0 + x1) / 2;
        d += `C${m} ${y0} ${m} ${y1} ${x1} ${y1}`;
    }

    const peak = fx(1000);
    let column = [];
    let lastX = 500;
    for (let f = 370; f < 37900; f += 2.93) {
        const x = fx(f);
        if (x < 500) continue;
        const dx = x - peak;
        const base = f < 1000 ? 363 : 373;
        let y = base - 2.52 * 10 * Math.log10(-Math.log(random() + 1e-9) + 1e-3);
        if (f > 19500) y -= Math.min(26, (f - 19500) / 100);
        if (dx > 0 && dx < 14) y = Math.min(y, 240 + dx * 10 + random() * 12);
        if (dx < 0 && dx > -4) y = Math.min(y, 345 + dx * 2);
        if (Math.abs(dx) < 0.8) y = 112;
        column.push(y);
        if (x - lastX >= 1) {
            // one high and one low point for each pixel column
            const lo = Math.max(...column), hi = Math.min(...column);
            d += `L${x.toFixed(1)} ${hi.toFixed(1)}`;
            if (column.length > 1) d += `L${(x + 0.4).toFixed(1)} ${lo.toFixed(1)}`;
            column = [];
            lastX = x;
        }
    }
    add(svg, 'path', { d: d, fill: 'none', stroke: '#b2b2b2', 'stroke-width': 1.8, 'stroke-linejoin': 'round' });
    add(svg, 'path', { d: `M${peak - 3} 330L${peak - 2} 111H${peak + 1}L${peak + 2} 300Z`, fill: '#b8b8b8' });
    add(svg, 'text', { x: peak, y: 102, 'text-anchor': 'middle' }, '1');

    // shade what is outside the measured span
    add(svg, 'rect', { x: left, y: top, width: fx(20) - left - 1, height: bottom - top, fill: '#101010', 'fill-opacity': 0.72 });
    add(svg, 'rect', { x: fx(20000), y: top, width: right - fx(20000), height: bottom - top, fill: '#101010', 'fill-opacity': 0.72 });
    add(svg, 'rect', { x: left, y: top, width: right - left, height: bottom - top, fill: 'none', stroke: '#4a4a4a' });

    // cursor
    const cx = crisp(fx(326));
    add(svg, 'path', { d: `M${left} 383.5H${right}M${cx} ${top}V${bottom + 3}`, stroke: '#fff' });
    const names = { 14.65: '15', 20: '20', 30: '30', 40: '40', 50: '50', 60: '60', 70: '70', 80: '80', 100: '100', 200: '200', 300: '300',
        400: '400', 500: '500', 600: '600', 800: '800', 1000: '1k', 2000: '2k', 3000: '3k', 4000: '4k', 5000: '5k', 6000: '6k',
        7000: '7k', 8000: '8k', 10000: '10k', 20000: '20k', 36600: '37.9kHz' };
    for (const f in names) {
        add(svg, 'text', { x: fx(+f), y: bottom + 16, 'text-anchor': 'middle' }, names[f]);
    }
    add(svg, 'rect', { x: cx - 12, y: bottom + 3, width: 23, height: 16, fill: '#1a1f2a', stroke: '#5a86c8' });
    add(svg, 'text', { x: cx, y: bottom + 16, 'text-anchor': 'middle', fill: '#6a94d8' }, '326');
    add(svg, 'rect', { x: -8, y: 375.5, width: 36, height: 16, fill: '#1a1f2a', stroke: '#5a86c8' });
    add(svg, 'text', { x: 27, y: 388, 'text-anchor': 'end', fill: '#6a94d8' }, '1.000u');
}

drawScope();
drawPlot();
```
